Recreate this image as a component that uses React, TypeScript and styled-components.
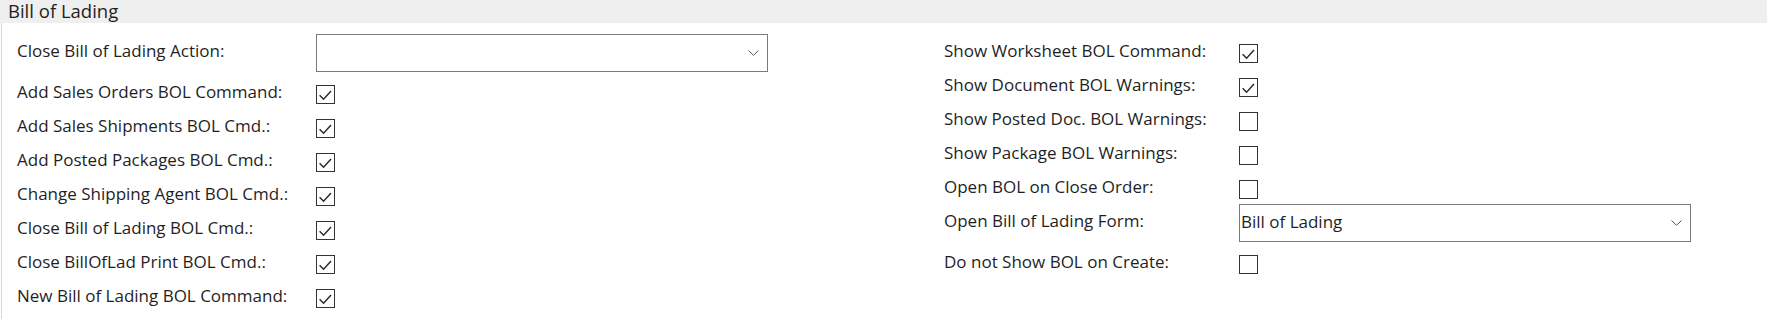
import React from 'react'
import styled, {createGlobalStyle} from 'styled-components'

const color = {
  text: '#1f1f1f',
  header: '#efefef',
  accent: '#c9d9f2',
  border: '#7a7a7a',
  box: '#333333',
}

type Field =
  | {label: string; kind: 'check'; checked: boolean}
  | {label: string; kind: 'select'; value: string}

const leftFields: Field[] = [
  {label: 'Close Bill of Lading Action:', kind: 'select', value: ''},
  {label: 'Add Sales Orders BOL Command:', kind: 'check', checked: true},
  {label: 'Add Sales Shipments BOL Cmd.:', kind: 'check', checked: true},
  {label: 'Add Posted Packages BOL Cmd.:', kind: 'check', checked: true},
  {label: 'Change Shipping Agent BOL Cmd.:', kind: 'check', checked: true},
  {label: 'Close Bill of Lading BOL Cmd.:', kind: 'check', checked: true},
  {label: 'Close BillOfLad Print BOL Cmd.:', kind: 'check', checked: true},
  {label: 'New Bill of Lading BOL Command:', kind: 'check', checked: true},
]

const rightFields: Field[] = [
  {label: 'Show Worksheet BOL Command:', kind: 'check', checked: true},
  {label: 'Show Document BOL Warnings:', kind: 'check', checked: true},
  {label: 'Show Posted Doc. BOL Warnings:', kind: 'check', checked: false},
  {label: 'Show Package BOL Warnings:', kind: 'check', checked: false},
  {label: 'Open BOL on Close Order:', kind: 'check', checked: false},
  {label: 'Open Bill of Lading Form:', kind: 'select', value: 'Bill of Lading'},
  {label: 'Do not Show BOL on Create:', kind: 'check', checked: false},
]

const GlobalStyle = createGlobalStyle`
  body {
    margin: 0;
    background: #fff;
    font-family: "Open Sans", "Noto Sans", sans-serif;
    color: ${color.text};
  }
`

const CheckBox = ({checked}: {checked: boolean}) => (
  <Box>
    {checked &&
      <svg width="17" height="17" viewBox="0 0 17 17">
        <path d="M2.6 9.2 L6.6 13.2 L14 5" fill="none" stroke="#2b2b2b" strokeWidth="1.5" />
      </svg>
    }
  </Box>
)

const Column = ({fields, labelWidth}: {fields: Field[]; labelWidth: number}) => (
  <FieldColumn>
    {fields.map(field => (
      <Row key={field.label} $tall={field.kind === 'select'}>
        <Label $width={labelWidth}>{field.label}</Label>
        {field.kind === 'check'
          ? <CheckBox checked={field.checked} />
          : <Select>
              <SelectValue>{field.value}</SelectValue>
              <svg width="11" height="6" viewBox="0 0 11 6">
                <path d="M0.5 0.5 L5.5 5.3 L10.5 0.5" fill="none" stroke="#555" strokeWidth="1" />
              </svg>
            </Select>
        }
      </Row>
    ))}
  </FieldColumn>
)

export default function App() {
  return (
    <>
      <GlobalStyle />
      <Panel>
        <Header>Bill of Lading</Header>
        <Body>
          <Column fields={leftFields} labelWidth={299} />
          <Column fields={rightFields} labelWidth={295} />
        </Body>
      </Panel>
    </>
  )
}

const Panel = styled.div`
  width: 1767px;
  height: 319px;
  display: flex;
  flex-direction: column;
`
const Header = styled.div`
  height: 23px;
  line-height: 21px;
  padding-left: 8px;
  background: ${color.header};
  font-size: 18.5px;
  color: ${color.text};
`
const Body = styled.div`
  flex: 1;
  display: grid;
  grid-template-columns: 927px 1fr;
  padding: 13px 0 0 15px;
  margin-left: 1px;
  border-left: 1px solid ${color.accent};
`
const FieldColumn = styled.div`
  display: flex;
  flex-direction: column;
`
const Row = styled.div<{$tall: boolean}>`
  display: flex;
  align-items: center;
  height: 34px;
  margin-bottom: ${p => (p.$tall ? '7px' : '0')};
`
const Label = styled.span<{$width: number}>`
  width: ${p => p.$width}px;
  flex-shrink: 0;
  padding-bottom: 6px;
  font-size: 17px;
  white-space: nowrap;
`
const Box = styled.div`
  width: 19px;
  height: 19px;
  box-sizing: border-box;
  border: 1px solid ${color.box};
  display: flex;
  align-items: center;
  justify-content: center;
  background: #fff;
`
const Select = styled.div`
  width: 452px;
  height: 38px;
  box-sizing: border-box;
  border: 1px solid ${color.border};
  display: flex;
  align-items: center;
  justify-content: space-between;
  padding: 0 8px 0 1px;
  background: #fff;
`
const SelectValue = styled.span`
  padding-bottom: 4px;
  font-size: 17px;
  color: ${color.text};
`
